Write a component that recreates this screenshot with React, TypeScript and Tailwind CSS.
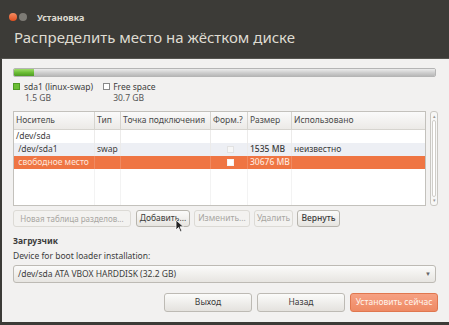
import React from "react";

const F = { fontFamily: '"Noto Sans", "Open Sans", sans-serif' };

function Btn({ children, disabled, className = "" }: { children: React.ReactNode; disabled?: boolean; className?: string }) {
  return (
    <div
      className={
        "flex items-center justify-center whitespace-nowrap rounded-[3px] border h-[17px] px-[2px] text-[8.5px] " +
        (disabled
          ? "border-[#dcdad5] bg-[#f3f2f0] text-[#a8a6a2] "
          : "border-[#b7b4ad] bg-gradient-to-b from-[#fbfbfa] to-[#e6e4e0] text-[#3c3c3c] ") +
        className
      }
    >
      {children}
    </div>
  );
}

export default function App() {
  const cols = [
    { w: "w-[81px]", t: "Носитель" },
    { w: "w-[26px]", t: "Тип" },
    { w: "w-[90px]", t: "Точка подключения" },
    { w: "w-[37px]", t: "Форм.?" },
    { w: "w-[44px]", t: "Размер" },
    { w: "flex-1", t: "Использовано" },
  ];
  const rows = [
    { c: ["/dev/sda", "", "", "", "", ""], bg: "bg-white", txt: "text-[#3c3c3c]", cb: 0 },
    { c: ["\u00a0/dev/sda1", "swap", "", "", "1535 MB", "неизвестно"], bg: "bg-[#edeff4]", txt: "text-[#3c3c3c]", cb: 1 },
    { c: ["\u00a0свободное место", "", "", "", "30676 MB", ""], bg: "bg-[#ef7543]", txt: "text-[#fde6dc]", cb: 2 },
  ];
  return (
    <div className="w-[449px] h-[325px] bg-[#3c3b37] flex flex-col overflow-hidden" style={F}>
      {/* title bar */}
      <div className="h-[58px] flex flex-col shrink-0">
        <div className="flex items-center h-[28px] pl-[9px] pt-[6px]">
          <div className="w-[8px] h-[8px] rounded-full bg-gradient-to-b from-[#f58b5f] to-[#df4e1b]" />
          <div className="w-[8px] h-[8px] rounded-full bg-[#7d7b75] ml-[2px]" />
          <div className="ml-[10px] text-[9px] font-bold text-[#dfdbd2] leading-none">Установка</div>
        </div>
        <div className="pl-[14px] pt-[2px] text-[15px] text-[#dfdbd2] leading-none whitespace-nowrap">
          Распределить место на жёстком диске
        </div>
      </div>
      {/* content */}
      <div className="flex-1 bg-[#f2f1f0] border-l-2 border-b-[3px] border-[#3c3b37] border-t border-t-[#55544f] flex flex-col pl-[11px] pr-[11px]">
        {/* partition bar */}
        <div className="mt-[9px] h-[9px] flex rounded-[2px] overflow-hidden border border-[#b5b5b5] w-[423px]">
          <div className="w-[20px] bg-gradient-to-b from-[#9fdc6a] via-[#6cbe35] to-[#4e9a24]" />
          <div className="flex-1 bg-gradient-to-b from-[#ececec] via-[#d0d0d0] to-[#b8b8b8]" />
        </div>
        {/* legend */}
        <div className="flex mt-[4px] text-[8.5px] text-[#3c3c3c] leading-[11px]">
          <div className="flex">
            <div className="w-[7px] h-[7px] mt-[2px] bg-[#6cbe35] border border-[#4e9a24]" />
            <div className="ml-[4px]">
              <div>sda1 (linux-swap)</div>
              <div className="pl-[1px] text-[#555]">1.5 GB</div>
            </div>
          </div>
          <div className="flex ml-[10px]">
            <div className="w-[7px] h-[7px] mt-[2px] bg-white border border-[#888]" />
            <div className="ml-[3px]">
              <div>Free space</div>
              <div className="text-[#555]">30.7 GB</div>
            </div>
          </div>
        </div>
        {/* table + scrollbar */}
        <div className="flex mt-[8px]">
          <div className="w-[414px] h-[95px] border border-[#c3c1bc] bg-white flex flex-col">
            <div className="flex h-[18px] shrink-0 bg-gradient-to-b from-[#fafafa] to-[#eceae7] border-b border-[#d6d4cf] text-[8.5px] text-[#4a4a4a]">
              {cols.map((c, i) => (
                <div key={i} className={c.w + " shrink-0 flex items-center whitespace-nowrap pl-[2px] " + (i < 5 ? "border-r border-[#d6d4cf]" : "")}>
                  {c.t}
                </div>
              ))}
            </div>
            {rows.map((r, ri) => (
              <div key={ri} className={"flex h-[13px] shrink-0 text-[8.5px] " + r.bg + " " + r.txt}>
                {r.c.map((t, i) => (
                  <div
                    key={i}
                    className={
                      cols[i].w +
                      " shrink-0 flex items-center whitespace-nowrap pl-[2px] " +
                      (i === 4 && ri > 0 ? "font-medium " : "") +
                      (i < 5 ? (ri === 2 ? "border-r border-[#f08a60]" : "border-r border-[#ecebea]") : "")
                    }
                  >
                    {i === 3 && r.cb > 0 ? (
                      <div className="w-full flex justify-center">
                        <div
                          className={
                            "w-[7px] h-[7px] " +
                            (r.cb === 1 ? "border border-[#e2e2e2] bg-[#f7f7f7]" : "bg-white border border-[#f5f5f5]")
                          }
                        />
                      </div>
                    ) : (
                      t
                    )}
                  </div>
                ))}
              </div>
            ))}
            <div className="flex-1 flex">
              {cols.map((c, i) => (
                <div key={i} className={c.w + " shrink-0 " + (i < 5 ? "border-r border-[#f3f3f3]" : "")} />
              ))}
            </div>
          </div>
          <div className="ml-[4px] w-[8px] h-[95px] rounded-[3px] border border-[#c9c7c2] bg-[#f7f7f6] flex flex-col justify-between items-center py-[2px]">
            <div className="text-[5px] leading-none text-[#999]">▴</div>
            <div className="flex-1 w-[4px] my-[1px] rounded-[2px] border border-[#d0cec9] bg-white" />
            <div className="text-[5px] leading-none text-[#999]">▾</div>
          </div>
        </div>
        {/* buttons row */}
        <div className="flex mt-[4px] gap-[4px] relative">
          <Btn disabled className="w-[118px] text-[8px]">Новая таблица разделов...</Btn>
          <Btn className="w-[54px] ml-[1px]">Добавить...</Btn>
          <Btn disabled className="w-[56px]">Изменить...</Btn>
          <Btn disabled className="w-[39px]">Удалить</Btn>
          <Btn className="w-[43px] font-medium">Вернуть</Btn>
          <svg className="absolute left-[162px] top-[9px]" width="10" height="14" viewBox="0 0 10 14">
            <path d="M1 1 L1 11 L3.5 8.5 L5.5 13 L7 12.3 L5 7.8 L8.5 7.8 Z" fill="#222" stroke="#fff" strokeWidth="0.8" />
          </svg>
        </div>
        {/* bootloader */}
        <div className="mt-[8px] text-[8.5px] font-bold text-[#3c3c3c] leading-[11px]">Загрузчик</div>
        <div className="mt-[4px] text-[8.5px] text-[#3c3c3c] leading-[11px]">Device for boot loader installation:</div>
        <div className="mt-[4px] w-[423px] h-[18px] rounded-[3px] border border-[#bdbab4] bg-gradient-to-b from-[#fbfbfa] to-[#e7e5e1] flex items-center justify-between px-[4px] text-[8.5px] text-[#3c3c3c]">
          <span>/dev/sda ATA VBOX HARDDISK (32.2 GB)</span>
          <span className="text-[6px] text-[#666]">▼</span>
        </div>
        {/* bottom buttons */}
        <div className="flex justify-end gap-[5px] mt-[10px]">
          <div className="w-[88px] h-[19px] rounded-[3px] border border-[#bdbab4] bg-gradient-to-b from-[#fbfbfa] to-[#e4e2de] flex items-center justify-center text-[8.5px] text-[#3c3c3c]">Выход</div>
          <div className="w-[88px] h-[19px] rounded-[3px] border border-[#bdbab4] bg-gradient-to-b from-[#fbfbfa] to-[#e4e2de] flex items-center justify-center text-[8.5px] text-[#3c3c3c]">Назад</div>
          <div className="w-[88px] h-[19px] rounded-[3px] border border-[#e0774f] bg-gradient-to-b from-[#f6a183] to-[#ee8a64] flex items-center justify-center text-[8.5px] text-[#fff3ec]">Установить сейчас</div>
        </div>
      </div>
    </div>
  );
}
